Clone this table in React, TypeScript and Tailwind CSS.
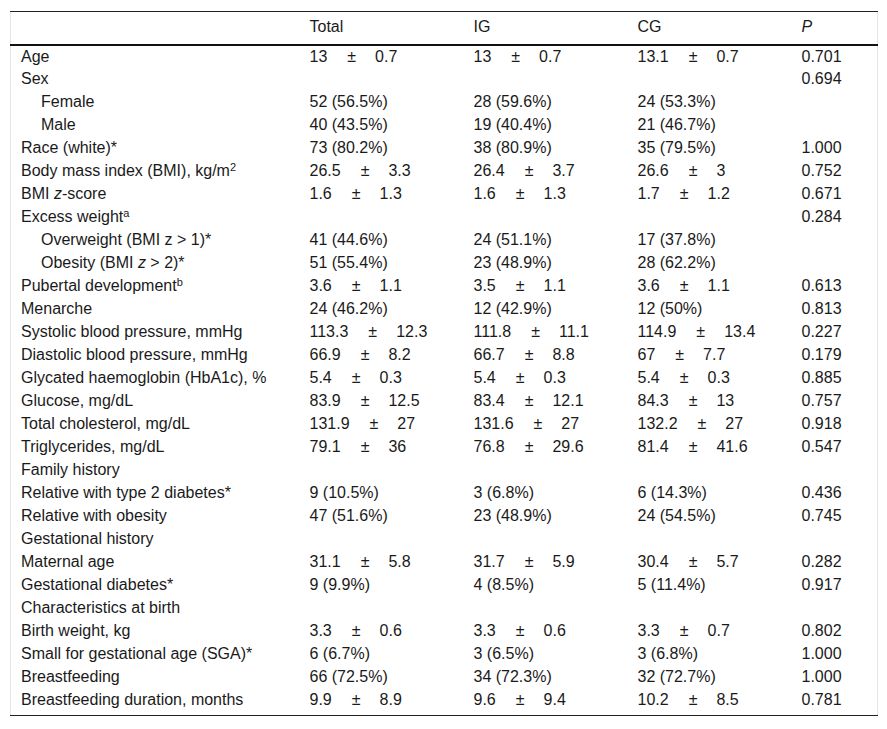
import type { ReactNode } from 'react';

type Cell = string | [string, string] | null;
type Row = { label: ReactNode; indent?: boolean; total?: Cell; ig?: Cell; cg?: Cell; p?: string };

const rows: Row[] = [
  { label: 'Age', total: ['13', '0.7'], ig: ['13', '0.7'], cg: ['13.1', '0.7'], p: '0.701' },
  { label: 'Sex', p: '0.694' },
  { label: 'Female', indent: true, total: '52 (56.5%)', ig: '28 (59.6%)', cg: '24 (53.3%)' },
  { label: 'Male', indent: true, total: '40 (43.5%)', ig: '19 (40.4%)', cg: '21 (46.7%)' },
  { label: 'Race (white)*', total: '73 (80.2%)', ig: '38 (80.9%)', cg: '35 (79.5%)', p: '1.000' },
  {
    label: (
      <>
        Body mass index (BMI), kg/m<sup className="text-[11px]">2</sup>
      </>
    ),
    total: ['26.5', '3.3'],
    ig: ['26.4', '3.7'],
    cg: ['26.6', '3'],
    p: '0.752',
  },
  {
    label: (
      <>
        BMI <i>z</i>-score
      </>
    ),
    total: ['1.6', '1.3'],
    ig: ['1.6', '1.3'],
    cg: ['1.7', '1.2'],
    p: '0.671',
  },
  {
    label: (
      <>
        Excess weight<sup className="text-[11px]">a</sup>
      </>
    ),
    p: '0.284',
  },
  { label: 'Overweight (BMI z > 1)*', indent: true, total: '41 (44.6%)', ig: '24 (51.1%)', cg: '17 (37.8%)' },
  {
    label: (
      <>
        Obesity (BMI <i>z</i> &gt; 2)*
      </>
    ),
    indent: true,
    total: '51 (55.4%)',
    ig: '23 (48.9%)',
    cg: '28 (62.2%)',
  },
  {
    label: (
      <>
        Pubertal development<sup className="text-[11px]">b</sup>
      </>
    ),
    total: ['3.6', '1.1'],
    ig: ['3.5', '1.1'],
    cg: ['3.6', '1.1'],
    p: '0.613',
  },
  { label: 'Menarche', total: '24 (46.2%)', ig: '12 (42.9%)', cg: '12 (50%)', p: '0.813' },
  { label: 'Systolic blood pressure, mmHg', total: ['113.3', '12.3'], ig: ['111.8', '11.1'], cg: ['114.9', '13.4'], p: '0.227' },
  { label: 'Diastolic blood pressure, mmHg', total: ['66.9', '8.2'], ig: ['66.7', '8.8'], cg: ['67', '7.7'], p: '0.179' },
  { label: 'Glycated haemoglobin (HbA1c), %', total: ['5.4', '0.3'], ig: ['5.4', '0.3'], cg: ['5.4', '0.3'], p: '0.885' },
  { label: 'Glucose, mg/dL', total: ['83.9', '12.5'], ig: ['83.4', '12.1'], cg: ['84.3', '13'], p: '0.757' },
  { label: 'Total cholesterol, mg/dL', total: ['131.9', '27'], ig: ['131.6', '27'], cg: ['132.2', '27'], p: '0.918' },
  { label: 'Triglycerides, mg/dL', total: ['79.1', '36'], ig: ['76.8', '29.6'], cg: ['81.4', '41.6'], p: '0.547' },
  { label: 'Family history' },
  { label: 'Relative with type 2 diabetes*', total: '9 (10.5%)', ig: '3 (6.8%)', cg: '6 (14.3%)', p: '0.436' },
  { label: 'Relative with obesity', total: '47 (51.6%)', ig: '23 (48.9%)', cg: '24 (54.5%)', p: '0.745' },
  { label: 'Gestational history' },
  { label: 'Maternal age', total: ['31.1', '5.8'], ig: ['31.7', '5.9'], cg: ['30.4', '5.7'], p: '0.282' },
  { label: 'Gestational diabetes*', total: '9 (9.9%)', ig: '4 (8.5%)', cg: '5 (11.4%)', p: '0.917' },
  { label: 'Characteristics at birth' },
  { label: 'Birth weight, kg', total: ['3.3', '0.6'], ig: ['3.3', '0.6'], cg: ['3.3', '0.7'], p: '0.802' },
  { label: 'Small for gestational age (SGA)*', total: '6 (6.7%)', ig: '3 (6.5%)', cg: '3 (6.8%)', p: '1.000' },
  { label: 'Breastfeeding', total: '66 (72.5%)', ig: '34 (72.3%)', cg: '32 (72.7%)', p: '1.000' },
  { label: 'Breastfeeding duration, months', total: ['9.9', '8.9'], ig: ['9.6', '9.4'], cg: ['10.2', '8.5'], p: '0.781' },
];

function Value({ cell }: { cell?: Cell }) {
  if (!cell) return null;
  if (typeof cell === 'string') return <>{cell}</>;
  return (
    <>
      {cell[0]}
      <span className="pl-[20px] pr-[19px]">±</span>
      {cell[1]}
    </>
  );
}

export default function App() {
  return (
    <div className="bg-white px-[10px] pt-[11px] font-['Liberation_Sans',Arial,sans-serif] text-[16px] leading-[18px] text-[#1a1a1a]">
      <table className="w-[867px] table-fixed border-collapse border-x border-x-[#e4e4e4]">
        <colgroup>
          <col className="w-[290px]" />
          <col className="w-[164px]" />
          <col className="w-[164px]" />
          <col className="w-[164px]" />
          <col className="w-[85px]" />
        </colgroup>
        <thead>
          <tr className="border-t border-t-[#222] border-b-2 border-b-[#111]">
            <th className="h-[33px] p-0 font-normal" />
            <th className="h-[33px] p-0 pb-[1px] pl-[9px] text-left font-normal">Total</th>
            <th className="h-[33px] p-0 pb-[1px] pl-[9px] text-left font-normal">IG</th>
            <th className="h-[33px] p-0 pb-[1px] pl-[9px] text-left font-normal">CG</th>
            <th className="h-[33px] p-0 pb-[1px] pl-[9px] text-left font-normal italic">P</th>
          </tr>
        </thead>
        <tbody className="border-b border-b-[#222]">
          {rows.map((row, i) => {
            const last = i === rows.length - 1;
            const td = `p-0 pl-[9px] align-middle whitespace-nowrap ${last ? 'h-[27px] pb-[4px]' : 'h-[23px]'}`;
            return (
              <tr key={i}>
                <td className={`${td} ${row.indent ? 'pl-[30px]' : 'pl-[10px]'}`}>{row.label}</td>
                <td className={td}>
                  <Value cell={row.total} />
                </td>
                <td className={td}>
                  <Value cell={row.ig} />
                </td>
                <td className={td}>
                  <Value cell={row.cg} />
                </td>
                <td className={td}>{row.p}</td>
              </tr>
            );
          })}
        </tbody>
      </table>
    </div>
  );
}
